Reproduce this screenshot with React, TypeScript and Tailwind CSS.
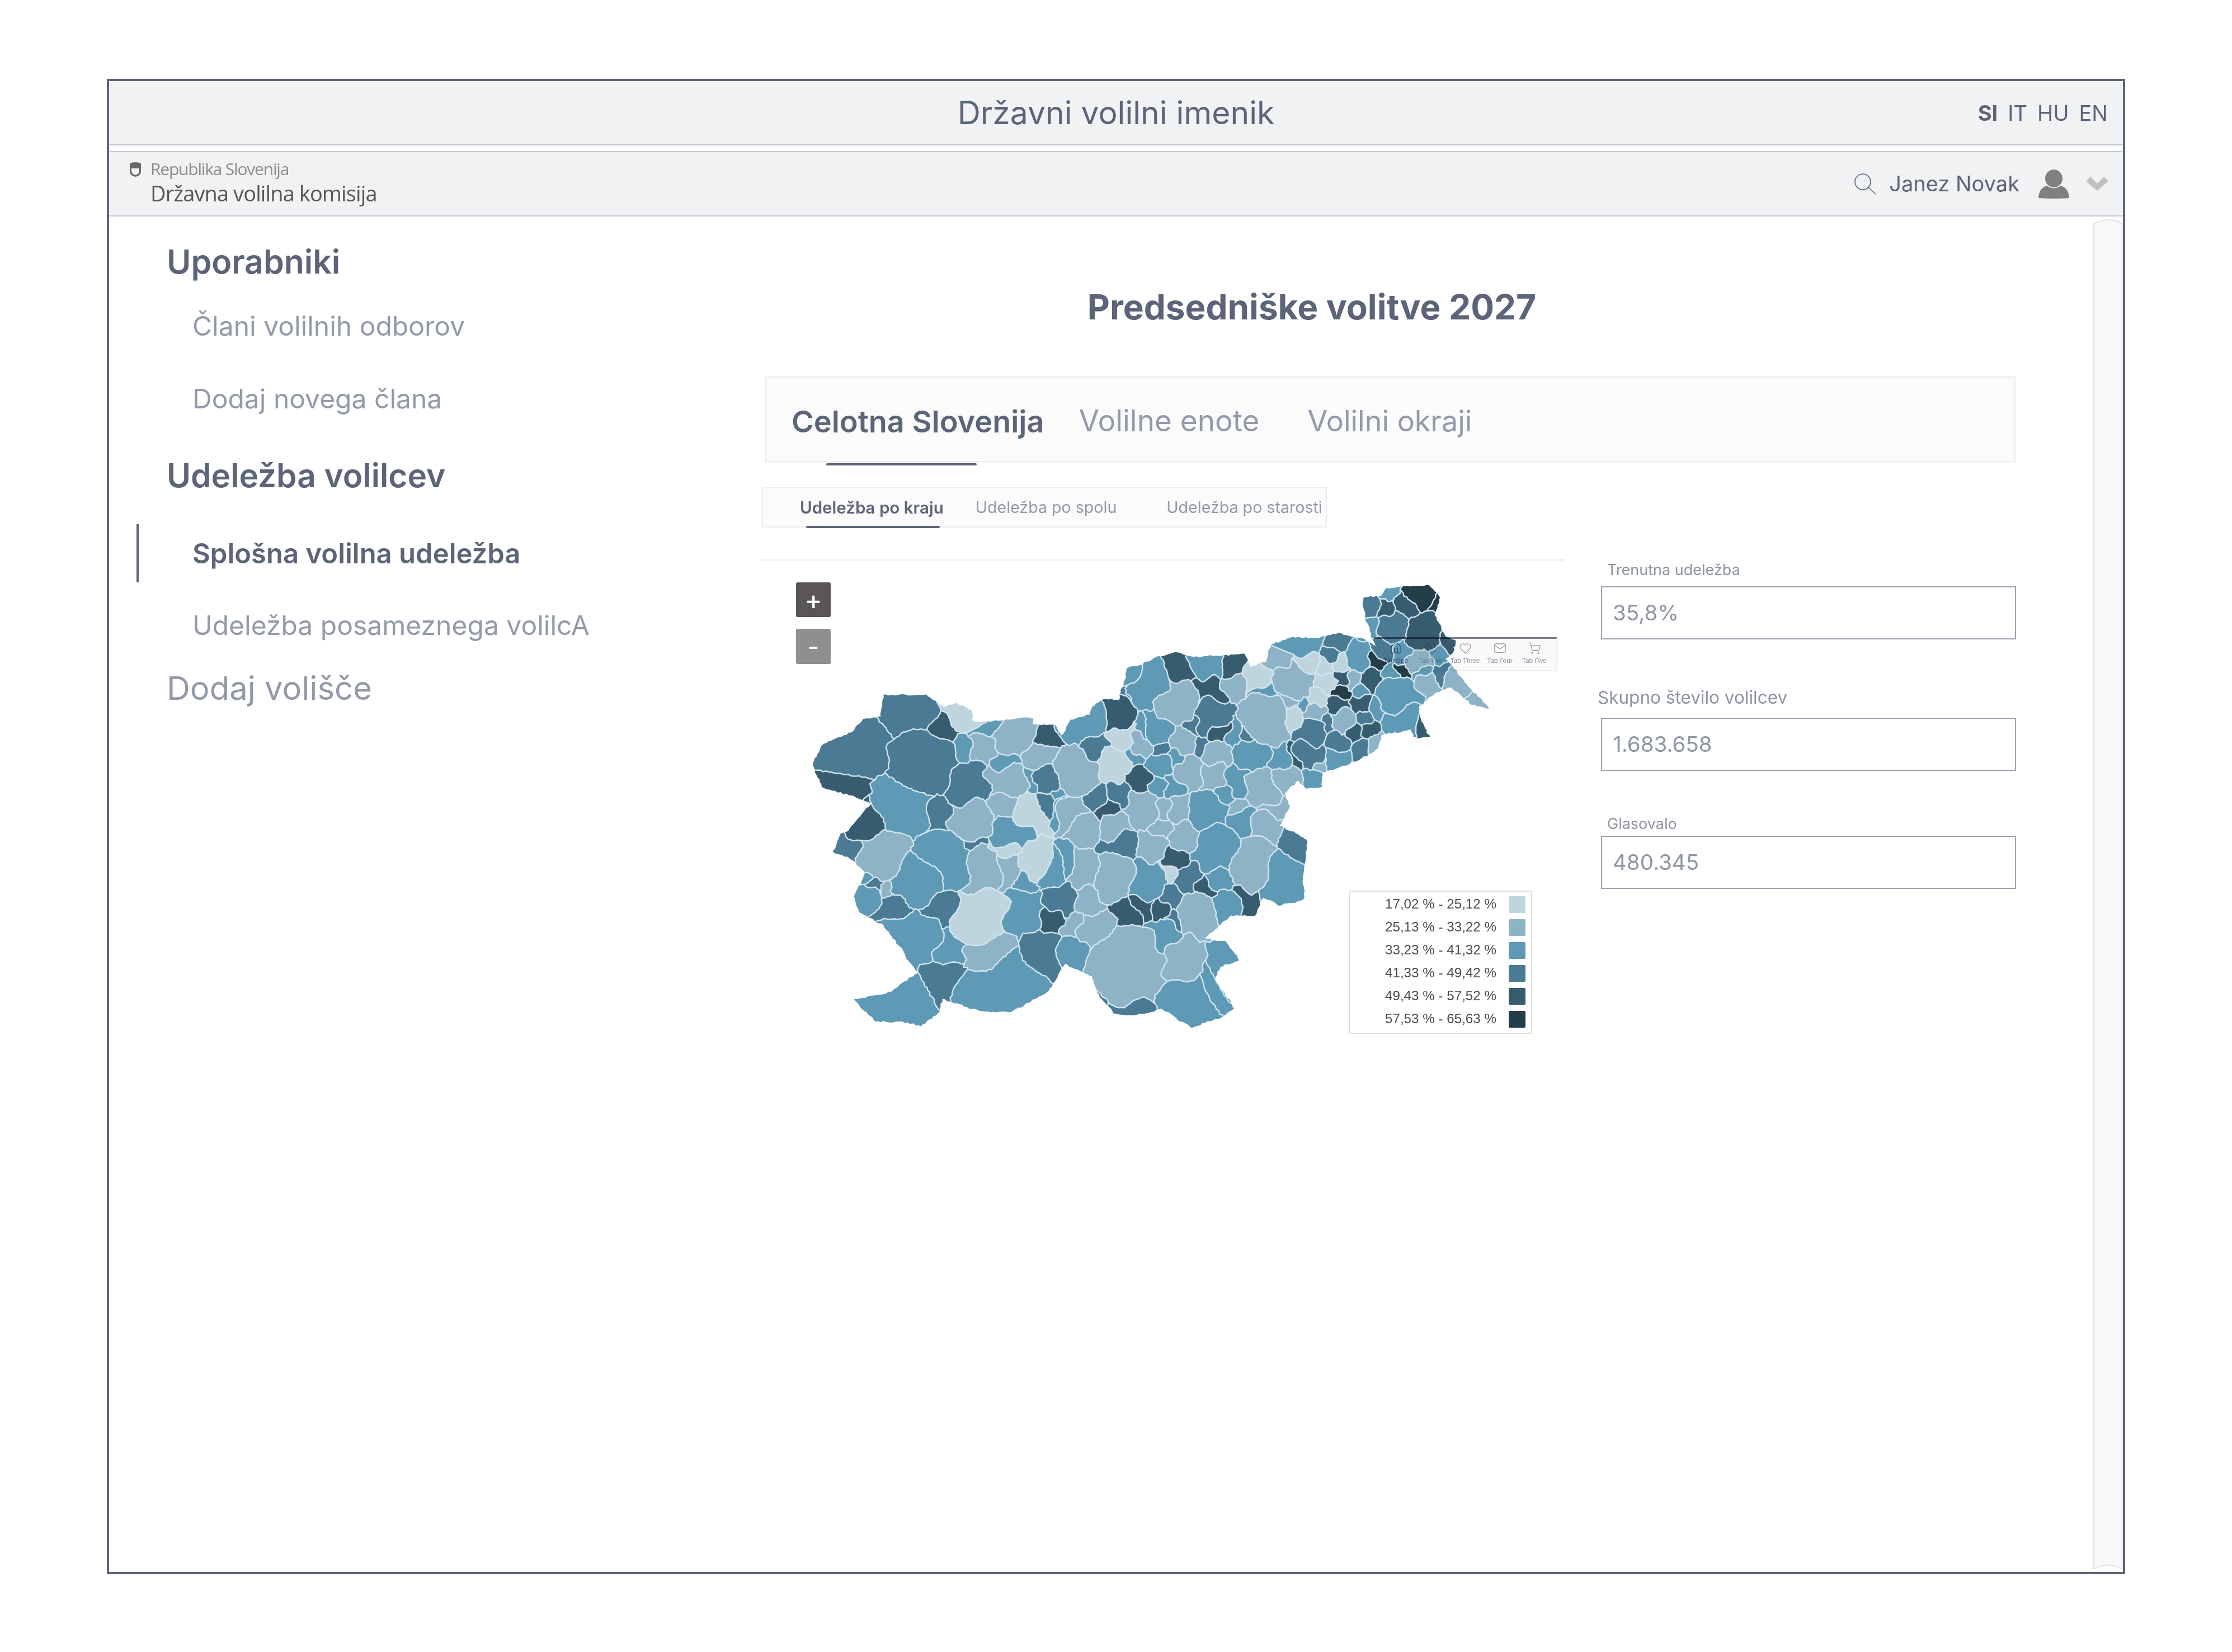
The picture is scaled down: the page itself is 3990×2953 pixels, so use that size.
import React, { FC } from 'react';
import { Clock, Heart, House, Mail, ShoppingCart } from 'lucide-react';

type Point = [number, number];
type Seed = [number, number, number, string];

const a = '#bfd5de';
const b = '#8fb3c6';
const c = '#5e9ab6';
const d = '#4a7a94';
const e = '#385c6f';
const f = '#233d49';

// seeds read off the reference crops, each list in the pixels of its own crop
const westSeeds: Seed[] = [
  [520, 170, 140, d], [260, 300, 170, d], [760, 180, 70, a], [660, 255, 95, e], [590, 380, 170, d],
  [200, 450, 110, e], [490, 560, 150, c], [810, 480, 110, d], [760, 330, 60, c], [880, 230, 55, c],
  [880, 320, 60, b], [1040, 260, 100, b], [1200, 255, 75, e], [1180, 350, 70, b], [1000, 390, 35, c],
  [1220, 450, 70, d], [1140, 460, 30, c], [1260, 510, 30, c], [1210, 545, 30, d], [1280, 560, 25, c],
  [1110, 590, 70, a], [1000, 470, 90, b], [640, 610, 90, d], [820, 620, 100, b], [990, 560, 70, b],
  [1400, 240, 80, c], [1450, 320, 70, d], [1350, 420, 110, b], [1530, 160, 90, e], [320, 630, 95, e],
  [390, 770, 120, b], [210, 750, 65, d], [680, 800, 140, c], [820, 710, 50, d], [1020, 680, 70, c],
  [1000, 740, 40, a], [870, 840, 100, b], [1000, 840, 70, b], [1090, 880, 40, c], [1140, 820, 60, a],
  [1230, 850, 55, c], [1300, 830, 25, c], [560, 880, 130, c], [430, 930, 35, b], [340, 905, 35, d],
  [310, 870, 25, c], [300, 960, 60, c], [450, 1005, 70, d], [665, 1000, 80, d], [870, 1040, 130, a],
  [1080, 1020, 110, c], [1225, 1050, 55, e], [1190, 1180, 90, d], [1340, 1075, 50, b], [1280, 970, 70, d],
  [1340, 1190, 70, c], [540, 1130, 125, c], [710, 1170, 70, c], [930, 1190, 110, b], [1000, 1320, 170, c],
  [690, 1330, 110, d], [500, 1400, 130, c], [310, 1410, 55, b],
];

const middleSeeds: Seed[] = [
  [315, 100, 60, a], [260, 220, 80, a], [420, 130, 55, b], [385, 170, 30, c], [490, 60, 75, c],
  [525, 230, 55, c], [430, 310, 50, e], [500, 330, 35, c], [525, 155, 25, d], [590, 205, 35, c],
  [645, 110, 60, b], [590, 330, 40, c], [680, 270, 70, b], [710, 30, 55, d], [825, 60, 60, e],
  [745, 135, 30, d], [830, 180, 65, b], [805, 290, 70, b], [860, 365, 30, c], [915, 90, 40, c],
  [950, 300, 70, c], [960, 500, 60, c], [1080, 340, 90, b], [1130, 430, 50, b], [1100, 530, 70, b],
  [1230, 570, 40, d], [945, 465, 30, b], [770, 460, 100, c], [420, 440, 90, b], [540, 450, 35, b],
  [630, 450, 60, b], [530, 540, 40, b], [650, 570, 75, b], [280, 530, 70, b], [490, 620, 60, b],
  [300, 610, 70, d], [820, 640, 120, c], [1020, 710, 120, b], [1190, 780, 130, c], [595, 680, 50, e],
  [555, 745, 40, a], [670, 780, 55, d], [770, 825, 38, e], [835, 780, 50, c], [860, 920, 70, c],
  [970, 890, 50, e], [450, 790, 95, c], [585, 870, 50, d], [360, 950, 50, e], [430, 920, 60, e],
  [520, 930, 40, e], [590, 980, 30, d], [720, 950, 100, b], [530, 1060, 75, c], [270, 770, 100, b],
  [110, 750, 80, b], [120, 880, 60, b], [170, 1040, 90, b], [340, 1200, 195, b], [650, 1170, 95, b],
  [850, 1170, 60, c], [800, 1230, 40, c], [700, 1370, 130, c], [330, 1390, 55, d], [190, 1320, 40, d],
  [180, 400, 50, d], [300, 385, 45, d], [235, 450, 55, e], [70, 450, 60, b], [140, 520, 50, b],
];

const eastSeeds: Seed[] = [
  [860, 110, 60, f], [950, 110, 35, f], [820, 150, 60, e], [725, 165, 45, e], [730, 85, 30, c],
  [655, 150, 45, d], [650, 260, 35, c], [760, 260, 75, d], [900, 300, 90, e], [1020, 360, 30, e],
  [720, 380, 45, d], [810, 400, 40, c], [670, 450, 35, f], [790, 520, 20, f], [880, 450, 50, b],
  [900, 515, 15, c], [975, 400, 35, c], [990, 530, 30, d], [925, 570, 40, b], [1070, 560, 70, b],
  [1120, 640, 30, b], [755, 540, 45, c], [770, 640, 100, c], [700, 700, 50, c], [790, 770, 85, c],
  [885, 820, 40, e], [655, 550, 50, e], [575, 560, 35, b], [520, 545, 35, e], [520, 620, 32, f],
  [510, 690, 45, e], [610, 680, 45, e], [605, 600, 25, c], [625, 755, 30, d], [525, 770, 60, b],
  [455, 790, 30, d], [645, 815, 35, e], [575, 830, 40, e], [680, 880, 25, b], [625, 920, 40, d],
  [500, 880, 50, d], [495, 955, 50, c], [380, 830, 65, d], [375, 950, 70, d], [315, 970, 35, e],
  [430, 1015, 45, b], [375, 1095, 50, c], [235, 985, 50, c], [255, 1080, 70, b], [300, 550, 100, b],
  [110, 540, 75, a], [350, 460, 65, a], [430, 480, 40, a], [230, 420, 50, b], [350, 370, 60, c],
  [490, 335, 60, d], [470, 410, 35, d], [520, 460, 35, a], [600, 430, 60, c], [430, 560, 55, a],
  [400, 630, 45, a], [260, 670, 50, b], [345, 680, 18, c], [270, 740, 60, a], [390, 730, 40, b],
  [155, 620, 45, c], [170, 760, 120, b], [90, 850, 40, d], [95, 950, 80, c], [40, 550, 50, b],
  [25, 480, 55, e],
];

const northSeeds: Seed[] = [
  [810, 350, 35, e], [740, 430, 45, c], [860, 355, 30, c], [855, 450, 30, e], [800, 480, 50, b],
  [705, 395, 22, c], [700, 445, 20, d], [860, 530, 45, d], [760, 560, 40, c],
];

// SVG box starts at 1340,980 in the page
const seeds: Seed[] = [
  ...westSeeds.map(([x, y, r, col]): Seed => [100 + x / 2.8, 220 + y / 2.376, r / 2.6, col]),
  ...middleSeeds.map(([x, y, r, col]): Seed => [560 + x / 3, 300 + y / 2.703, r / 2.85, col]),
  ...eastSeeds.map(([x, y, r, col]): Seed => [860 + x / 2.613, 50 + y / 3, r / 2.8, col]),
  ...northSeeds.map(([x, y, r, col]): Seed => [x / 1.0453, y / 1.742, r / 1.4, col]),
];

const outlineRaw: Point[] = [
  [118, 665], [135, 610], [190, 570], [212, 528], [245, 520], [250, 452], [300, 455], [330, 452],
  [365, 490], [385, 478], [415, 500], [418, 535], [455, 535], [530, 525], [530, 545], [570, 545],
  [582, 580], [600, 530], [635, 515], [640, 490], [665, 465], [690, 470], [705, 370], [730, 360],
  [760, 335], [795, 320], [830, 335], [885, 330], [925, 325], [935, 365], [965, 350], [975, 295],
  [1010, 275], [1060, 275], [1100, 260], [1140, 275], [1170, 300], [1150, 215], [1147, 150], [1180, 145],
  [1190, 120], [1225, 115], [1270, 112], [1290, 150], [1280, 205], [1300, 270], [1320, 285], [1315, 320],
  [1300, 340], [1340, 420], [1382, 495], [1350, 485], [1310, 430], [1280, 450], [1250, 490], [1255, 535],
  [1272, 585], [1240, 585], [1235, 560], [1180, 580], [1175, 620], [1140, 655], [1100, 680], [1070, 695],
  [1070, 740], [1040, 745], [1025, 720], [1000, 760], [1010, 800], [990, 860], [1042, 905], [1035, 1010],
  [1035, 1090], [990, 1110], [960, 1085], [945, 1140], [900, 1140], [880, 1170], [850, 1210], [890, 1220],
  [915, 1280], [880, 1300], [870, 1340], [905, 1430], [880, 1460], [825, 1490], [790, 1450], [770, 1430],
  [720, 1450], [680, 1445], [650, 1380], [640, 1330], [590, 1290], [555, 1380], [490, 1440], [440, 1440],
  [410, 1430], [360, 1400], [355, 1440], [320, 1485], [280, 1470], [235, 1470], [195, 1400], [250, 1385],
  [315, 1320], [290, 1260], [250, 1170], [205, 1130], [195, 1080], [215, 1010], [195, 970], [155, 940],
  [170, 885], [180, 880], [230, 790], [185, 765], [135, 740],
];

const hash = (x: number, y: number) => {
  const s = Math.sin(x * 12.9898 + y * 78.233) * 43758.5453;
  return s - Math.floor(s) - 0.5;
};

const round = (p: Point): Point => [Math.round(p[0] * 10) / 10, Math.round(p[1] * 10) / 10];

// both neighbours of a border must get the same wiggle, so walk it in a fixed direction
const wiggle = (from: Point, to: Point, amp: number, bend: number): Point[] => {
  const flip = from[0] > to[0] || (from[0] === to[0] && from[1] > to[1]);
  const [p, q] = flip ? [to, from] : [from, to];
  const len = Math.hypot(q[0] - p[0], q[1] - p[1]);
  if (len < 0.3) return [from];
  const n = Math.max(1, Math.ceil(len / 5));
  const nx = -(q[1] - p[1]) / len;
  const ny = (q[0] - p[0]) / len;
  const curve = hash(p[0] + q[0], p[1] - q[1]) * len * bend;
  const swing = hash(p[0] - q[0], p[1] + q[1]) * len * bend;
  const pts: Point[] = [];
  for (let i = 0; i < n; i++) {
    const t = i / n;
    const x = p[0] + (q[0] - p[0]) * t;
    const y = p[1] + (q[1] - p[1]) * t;
    const off =
      i === 0 ? 0 : hash(x, y) * amp + Math.sin(Math.PI * t) * curve + Math.sin(2 * Math.PI * t) * swing;
    pts.push([x + nx * off, y + ny * off]);
  }
  if (!flip) return pts;
  const back = pts.slice(1).reverse();
  return [q, ...back];
};

const roughen = (poly: Point[], amp: number, bend: number) =>
  poly.flatMap((p, i) => wiggle(p, poly[(i + 1) % poly.length], amp, bend));

const toPath = (poly: Point[]) =>
  'M' + poly.map((p) => `${p[0].toFixed(1)} ${p[1].toFixed(1)}`).join('L') + 'Z';

const cellOf = (i: number): Point[] => {
  const [px, py, pr] = seeds[i];
  let poly: Point[] = [[-60, -60], [1560, -60], [1560, 960], [-60, 960]];
  seeds.forEach(([qx, qy, qr], j) => {
    if (j === i || poly.length === 0) return;
    const side = (v: Point) =>
      (v[0] - px) ** 2 + (v[1] - py) ** 2 - pr * pr - (v[0] - qx) ** 2 - (v[1] - qy) ** 2 + qr * qr;
    const next: Point[] = [];
    poly.forEach((v, k) => {
      const w = poly[(k + 1) % poly.length];
      const sv = side(v);
      const sw = side(w);
      if (sv <= 0) next.push(v);
      if (sv <= 0 !== sw <= 0) {
        const t = sv / (sv - sw);
        next.push([v[0] + (w[0] - v[0]) * t, v[1] + (w[1] - v[1]) * t]);
      }
    });
    poly = next;
  });
  return poly.map(round);
};

const cells = seeds
  .map((seed, i) => ({ color: seed[3], poly: cellOf(i) }))
  .filter((cell) => cell.poly.length > 2)
  .map((cell) => ({ color: cell.color, path: toPath(roughen(cell.poly, 3.2, 0.3)) }));

const outlinePath = toPath(
  roughen(outlineRaw.map((p): Point => [p[0] / 1.0453, p[1] / 1.742]), 2.8, 0.05)
);

const SloveniaMap: FC = () => (
  <svg
    className="absolute left-[-20px] top-[-20px] mix-blend-multiply blur-[0.7px]"
    width={1500}
    height={900}
    viewBox="0 0 1500 900"
  >
    <defs>
      <clipPath id="slovenia">
        <path d={outlinePath} />
      </clipPath>
    </defs>
    <g clipPath="url(#slovenia)">
      {cells.map((cell, i) => (
        <path key={i} d={cell.path} fill={cell.color} stroke="#d3e6ef" strokeWidth={2.2} strokeLinejoin="round" />
      ))}
    </g>
  </svg>
);

const legendRows = [
  { label: '17,02 % - 25,12 %', color: 'bg-[#bfd5de]' },
  { label: '25,13 % - 33,22 %', color: 'bg-[#8fb3c6]' },
  { label: '33,23 % - 41,32 %', color: 'bg-[#5e9ab6]' },
  { label: '41,33 % - 49,42 %', color: 'bg-[#4a7a94]' },
  { label: '49,43 % - 57,52 %', color: 'bg-[#385c6f]' },
  { label: '57,53 % - 65,63 %', color: 'bg-[#233d49]' },
];

const Legend: FC = () => (
  <div className="absolute left-[1051px] top-[590px] flex h-[256px] w-[328px] flex-col justify-center rounded-[3px] border-2 border-[#dddddd] bg-white pb-[2px] pr-[10px] [font-family:'Liberation_Sans',sans-serif]">
    {legendRows.map((row) => (
      <div key={row.label} className="flex h-[41px] items-center justify-end">
        <span className="text-[24.2px] text-[#4d4d4d] blur-[0.4px]">{row.label}</span>
        <span className={`ml-[22px] h-[30px] w-[30px] rounded-[2px] ${row.color}`} />
      </div>
    ))}
  </div>
);

const tabBarItems = [
  { label: 'Tab One', icon: House, tone: 'text-[#7d7d92]' },
  { label: 'Tab Two', icon: Clock, tone: 'text-[#b9b9c6]' },
  { label: 'Tab Three', icon: Heart, tone: 'text-[#8a8a9c]' },
  { label: 'Tab Four', icon: Mail, tone: 'text-[#8a8a9c]' },
  { label: 'Tab Five', icon: ShoppingCart, tone: 'text-[#8a8a9c]' },
];

const GhostTabBar: FC = () => (
  <div className="absolute left-[1096px] top-[137px] flex h-[61px] w-[328px] justify-between border-t-[3px] border-r-2 border-b-2 border-t-[#7c7a8e] border-r-[#eeeef1] border-b-[#eeeef1] bg-[#fafafb] pl-[8px] pr-[8px]">
    {tabBarItems.map((item) => (
      <div key={item.label} className={`flex w-[62px] flex-col items-center pt-[5px] ${item.tone}`}>
        <item.icon size={23} strokeWidth={1.2} />
        <span className="mt-[4px] whitespace-nowrap text-[11px] leading-[14px]">{item.label}</span>
      </div>
    ))}
  </div>
);

const MapPanel: FC = () => (
  <div className="relative h-[860px] w-[1436px] border-t-2 border-t-[#e9eaed]">
    <GhostTabBar />
    <SloveniaMap />
    <div className="absolute left-[63px] top-[39px] flex h-[62px] w-[62px] items-center justify-center rounded-[3px] bg-[#5a5558] text-[46px] font-medium leading-none text-white">
      +
    </div>
    <div className="absolute left-[63px] top-[122px] flex h-[63px] w-[62px] items-center justify-center rounded-[3px] bg-[#918e91] text-[44px] font-medium leading-none text-white">
      -
    </div>
    <Legend />
  </div>
);

const Stat: FC<{ label: string; value: string; labelClass: string; boxClass: string }> = ({
  label,
  value,
  labelClass,
  boxClass,
}) => (
  <>
    <div className={`whitespace-nowrap text-[#8d94a3] ${labelClass}`}>{label}</div>
    <div
      className={`ml-[6px] flex h-[95px] w-[742px] items-center border-2 border-[#9ca3b1] pl-[19px] text-[38.5px] text-[#8d94a3] ${boxClass}`}
    >
      {value}
    </div>
  </>
);

const StatsPanel: FC = () => (
  <div className="ml-[60px] flex w-[748px] flex-col">
    <Stat
      label="Trenutna udeležba"
      value="35,8%"
      labelClass="mt-[4px] ml-[17px] h-[30px] text-[27px] leading-[30px]"
      boxClass="mt-[14px]"
    />
    <Stat
      label="Skupno število volilcev"
      value="1.683.658"
      labelClass="mt-[87px] h-[34px] text-[31.5px] leading-[34px]"
      boxClass="mt-[19px]"
    />
    <Stat
      label="Glasovalo"
      value="480.345"
      labelClass="mt-[80px] ml-[17px] h-[30px] text-[27px] leading-[30px]"
      boxClass="mt-[6px]"
    />
  </div>
);

const Sidebar: FC = () => (
  <div className="flex w-[1165px] shrink-0 flex-col pt-[41px]">
    <div className="ml-[103px] flex h-20 items-center text-[59px] font-semibold text-[#5b6478]">Uporabniki</div>
    <div className="ml-[149px] mt-[35px] flex h-20 items-center text-[48px] text-[#929aaa]">Člani volilnih odborov</div>
    <div className="ml-[149px] mt-[50px] flex h-20 items-center text-[48px] text-[#929aaa]">Dodaj novega člana</div>
    <div className="ml-[103px] mt-[57px] flex h-20 items-center text-[58.5px] font-semibold text-[#5b6478]">Udeležba volilcev</div>
    <div className="ml-[49px] mt-[47px] flex h-[104px] items-center border-l-4 border-l-[#5b6478] pl-[96px] pt-[2px] text-[49px] font-semibold text-[#5b6478]">
      Splošna volilna udeležba
    </div>
    <div className="ml-[149px] mt-[37px] flex h-20 items-center text-[48px] text-[#929aaa]">Udeležba posameznega volilcA</div>
    <div className="ml-[103px] mt-[32px] flex h-20 items-center text-[58px] text-[#929aaa]">Dodaj volišče</div>
  </div>
);

const Scrollbar: FC = () => (
  <svg className="mt-[5px] shrink-0" width={53} height={2415} viewBox="0 0 53 2415">
    <path d="M1 8 Q 32 -6 52 8 L52 2413 Q 26 2398 1 2413 Z" fill="#f8f8f9" stroke="#e2e2e7" strokeWidth={2} />
  </svg>
);

const App: FC = () => (
  <div className="min-h-[2953px] bg-white pl-[191px] pt-[141px] [font-family:Inter,sans-serif]">
    <div className="flex h-[2673px] w-[3608px] flex-col border-4 border-[#5b6478]">
      <div className="relative flex h-[115px] shrink-0 items-center justify-center border-b-2 border-b-[#bfc3cc] bg-[#f1f2f4] text-[#5b6478]">
        <span className="text-[57px]">Državni volilni imenik</span>
        <div className="absolute right-[27px] top-[34px] flex gap-[18px] text-[38px] leading-[46px]">
          <span className="font-bold">SI</span>
          <span>IT</span>
          <span>HU</span>
          <span>EN</span>
        </div>
      </div>
      <div className="mt-[10px] flex h-[117px] shrink-0 items-center justify-between border-y-2 border-y-[#c6c9d1] bg-[#f1f2f4] pl-[35px] pr-[26px]">
        <div className="flex">
          <svg className="mt-[-2px]" width={24} height={28} viewBox="0 0 24 28">
            <path d="M2 3 Q12 -1 22 3 L22 17 Q22 25 12 27 Q2 25 2 17 Z" fill="#666666" />
            <path d="M5 12 L19 12 L19 17 Q19 22 12 24 Q5 22 5 17 Z" fill="#f1f2f4" />
          </svg>
          <div className="ml-[15px] mt-[-6px] [font-family:'Open_Sans',sans-serif]">
            <div className="h-[36px] text-[30px] leading-[34px] tracking-[-1.2px] text-[#8c8c8c] blur-[0.4px]">Republika Slovenija</div>
            <div className="h-[46px] text-[38px] font-medium leading-[48px] tracking-[-0.9px] text-[#555555] blur-[0.4px]">Državna volilna komisija</div>
          </div>
        </div>
        <div className="flex items-center text-[#5b6478]">
          <svg width={40} height={38} viewBox="0 0 40 38" fill="none" stroke="#5b6478" strokeWidth={1.6}>
            <circle cx={16} cy={15} r={14} />
            <path d="M26 25 L39 37" />
          </svg>
          <span className="ml-[23px] text-[38px]">Janez Novak</span>
          <svg className="ml-[34px]" width={55} height={52} viewBox="0 0 55 52" fill="#808080">
            <ellipse cx={27.5} cy={16} rx={15.5} ry={16} />
            <path d="M0 51 Q1 33 15 29 Q27 38 40 29 Q54 33 55 51 Q27 53 0 51 Z" />
          </svg>
          <svg className="ml-[30px]" width={40} height={25} viewBox="0 0 40 25" fill="#c0c0c0">
            <path d="M0 8 L8 0 L20 12 L32 0 L40 8 L20 25 Z" />
          </svg>
        </div>
      </div>
      <div className="flex min-h-0 flex-1">
        <Sidebar />
        <div className="flex w-[2382px] shrink-0 flex-col">
          <div className="mt-[121px] flex h-20 w-[1970px] items-center justify-center text-[62px] font-bold text-[#5b6478]">
            Predsedniške volitve 2027
          </div>
          <div className="relative ml-[8px] mt-[85px] flex h-[153px] w-[2235px] items-center border-2 border-[#ececf0] bg-[#fbfbfc] pl-[45px] pt-[7px]">
            <span className="text-[54px] font-semibold text-[#5b6478]">Celotna Slovenija</span>
            <span className="ml-[62px] text-[53px] text-[#929aaa]">Volilne enote</span>
            <span className="ml-[86px] text-[52px] text-[#929aaa]">Volilni okraji</span>
            <div className="absolute bottom-[-8px] left-[107px] h-[4px] w-[269px] rounded-sm bg-[#5b6478]" />
          </div>
          <div className="relative ml-[2px] mt-[45px] flex h-[72px] w-[1010px] items-center whitespace-nowrap border-2 border-[#ececf0] bg-[#fbfbfc] pl-[66px]">
            <span className="shrink-0 text-[29.5px] font-semibold text-[#5b6478]">Udeležba po kraju</span>
            <span className="ml-[57px] shrink-0 text-[28.6px] text-[#929aaa]">Udeležba po spolu</span>
            <span className="ml-[89px] text-[28.6px] text-[#929aaa]">Udeležba po starosti</span>
            <div className="absolute bottom-[-3px] left-[77px] h-[4px] w-[239px] rounded-sm bg-[#5b6478]" />
          </div>
          <div className="mt-[57px] flex">
            <MapPanel />
            <StatsPanel />
          </div>
        </div>
        <Scrollbar />
      </div>
    </div>
  </div>
);

export default App;
